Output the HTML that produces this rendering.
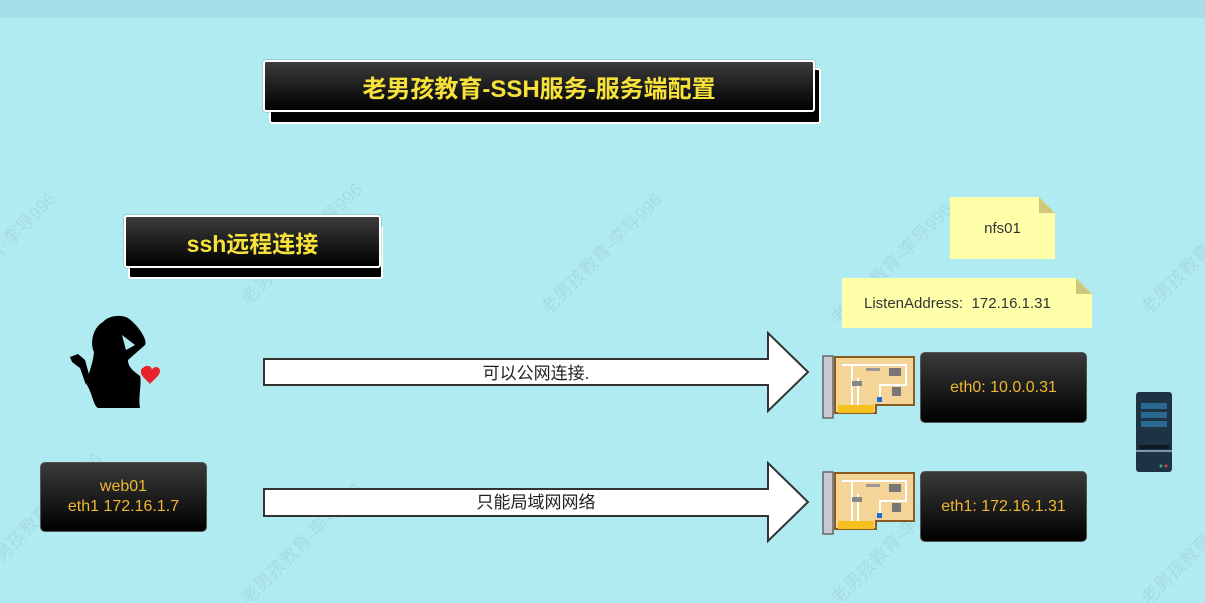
<!DOCTYPE html><html><head><meta charset="utf-8"><style>
*{margin:0;padding:0;box-sizing:border-box}
html{width:1205px;height:603px;overflow:hidden}
body{width:1205px;height:603px;background:#b1ebf2;position:relative;overflow:hidden;font-family:"Liberation Sans","Noto Sans CJK SC",sans-serif}
.top{position:absolute;left:0;top:0;width:1205px;height:18px;background:#a7dfe8}
.a{position:absolute}
.blk{position:absolute;background:linear-gradient(#3a3a3a,#000);border:1px solid #555;border-radius:5px;color:#f0b830;text-align:center;display:flex;align-items:center;justify-content:center;font-size:16px;line-height:20px}
.ttl{position:absolute;background:linear-gradient(#3c3c3c,#000);border:2px solid #fff;border-radius:3px;color:#f6e23a;font-weight:bold;display:flex;align-items:center;justify-content:center;box-shadow:0 0 1px #333}
.sh{position:absolute;background:#000;border:2px solid #fff;border-radius:3px}
.note{position:absolute;background:#ffffaa;color:#333;font-size:15px;display:flex;align-items:center;justify-content:center}
.wm{position:absolute;color:rgba(120,150,160,0.18);font-size:18px;transform:rotate(-45deg);white-space:nowrap}
</style></head><body>
<div class="top"></div>
<div class="wm" style="left:-40px;top:220px">教育-李导996</div>
<div class="wm" style="left:220px;top:230px">老男孩教育-李导996</div>
<div class="wm" style="left:520px;top:240px">老男孩教育-李导996</div>
<div class="wm" style="left:810px;top:250px">老男孩教育-李导996</div>
<div class="wm" style="left:1120px;top:240px">老男孩教育-李导996</div>
<div class="wm" style="left:-40px;top:500px">老男孩教育-李导996</div>
<div class="wm" style="left:220px;top:530px">老男孩教育-李导996</div>
<div class="wm" style="left:810px;top:530px">老男孩教育-李导996</div>
<div class="wm" style="left:1120px;top:530px">老男孩教育-李导996</div>

<div class="sh" style="left:269px;top:68px;width:552px;height:56px"></div>
<div class="ttl" style="left:263px;top:60px;width:552px;height:52px;font-size:24px">老男孩教育-SSH服务-服务端配置</div>
<div class="sh" style="left:128px;top:226px;width:255px;height:53px"></div>
<div class="ttl" style="left:124px;top:215px;width:257px;height:53px;font-size:23px">ssh远程连接</div>

<svg class="a" style="left:0;top:0" width="1205" height="603">
<g stroke="#333" stroke-width="2" fill="#fff">
<path d="M264 359H768V333L808 372L768 411V385H264Z"/>
<path d="M264 489H768V463L808 502L768 541V516H264Z"/>
</g>
<text x="536" y="379" font-size="17" text-anchor="middle" fill="#222" font-family="Liberation Sans,Noto Sans CJK SC,sans-serif">可以公网连接.</text>
<text x="536" y="508" font-size="17" text-anchor="middle" fill="#222" font-family="Liberation Sans,Noto Sans CJK SC,sans-serif">只能局域网网络</text>
<g fill="#000">
<path d="M103 322C92 328 90 345 94 352C93 365 88 372 87 385C93 395 93 405 98 408H140C138 395 142 385 140 376C135 372 128 368 128 360L145 345C148 340 138 325 128 318C120 314 108 316 103 322ZM122 335L135 345L126 350Z"/>
<path d="M70 357L78 354L85 360L90 378L86 385L80 368L72 362Z"/>
</g>
<path d="M143 368C146 364 152 366 152 370C153 366 160 366 160 371C160 376 152 381 150 384C147 380 140 376 141 371C141 368 143 368 143 368Z" fill="#e8222a"/>
<g id="nic">
<rect x="823" y="356" width="10" height="62" fill="#c8c8d0" stroke="#666" stroke-width="1.5"/>
<path d="M835 357H914V405H876V413H835Z" fill="#f4d597" stroke="#8a5a20" stroke-width="2"/>
<path d="M842 365H906V385H880V398M852 364V405M858 378V405" stroke="#fff" stroke-width="2" fill="none"/>
<rect x="838" y="405" width="36" height="8" fill="#f6c020"/>
<rect x="889" y="368" width="12" height="8" fill="#777"/><rect x="892" y="387" width="9" height="9" fill="#777"/>
<rect x="852" y="381" width="10" height="5" fill="#888"/><rect x="866" y="368" width="14" height="3" fill="#999"/>
<rect x="877" y="397" width="5" height="5" fill="#1a6ed8"/>
</g>
<use href="#nic" transform="translate(0,116)"/>
<rect x="1136" y="392" width="36" height="80" rx="3" fill="#1d3344"/>
<rect x="1141" y="403" width="26" height="6" fill="#2a6a90"/><rect x="1141" y="412" width="26" height="6" fill="#2a6a90"/><rect x="1141" y="421" width="26" height="6" fill="#2a6a90"/>
<rect x="1136" y="450" width="36" height="2" fill="#7d95a5"/><rect x="1139" y="445" width="30" height="4" fill="#0c1a24"/>
<circle cx="1161" cy="466" r="1.5" fill="#3a9"/><circle cx="1166" cy="466" r="1.5" fill="#c45"/>
</svg>

<div class="note" style="left:950px;top:197px;width:105px;height:62px;clip-path:polygon(0 0,89px 0,105px 16px,105px 62px,0 62px)">nfs01</div>
<div class="a" style="left:1039px;top:197px;width:16px;height:16px;background:#d0c878;clip-path:polygon(0 0,100% 100%,0 100%)"></div>
<div class="note" style="left:842px;top:278px;width:250px;height:50px;clip-path:polygon(0 0,234px 0,250px 16px,250px 50px,0 50px);justify-content:flex-start;padding-left:22px">ListenAddress:&nbsp; 172.16.1.31</div>
<div class="a" style="left:1076px;top:278px;width:16px;height:16px;background:#d0c878;clip-path:polygon(0 0,100% 100%,0 100%)"></div>

<div class="blk" style="left:920px;top:352px;width:167px;height:71px">eth0: 10.0.0.31</div>
<div class="blk" style="left:920px;top:471px;width:167px;height:71px">eth1: 172.16.1.31</div>
<div class="blk" style="left:40px;top:462px;width:167px;height:70px">web01<br>eth1 172.16.1.7</div>
</body></html>
